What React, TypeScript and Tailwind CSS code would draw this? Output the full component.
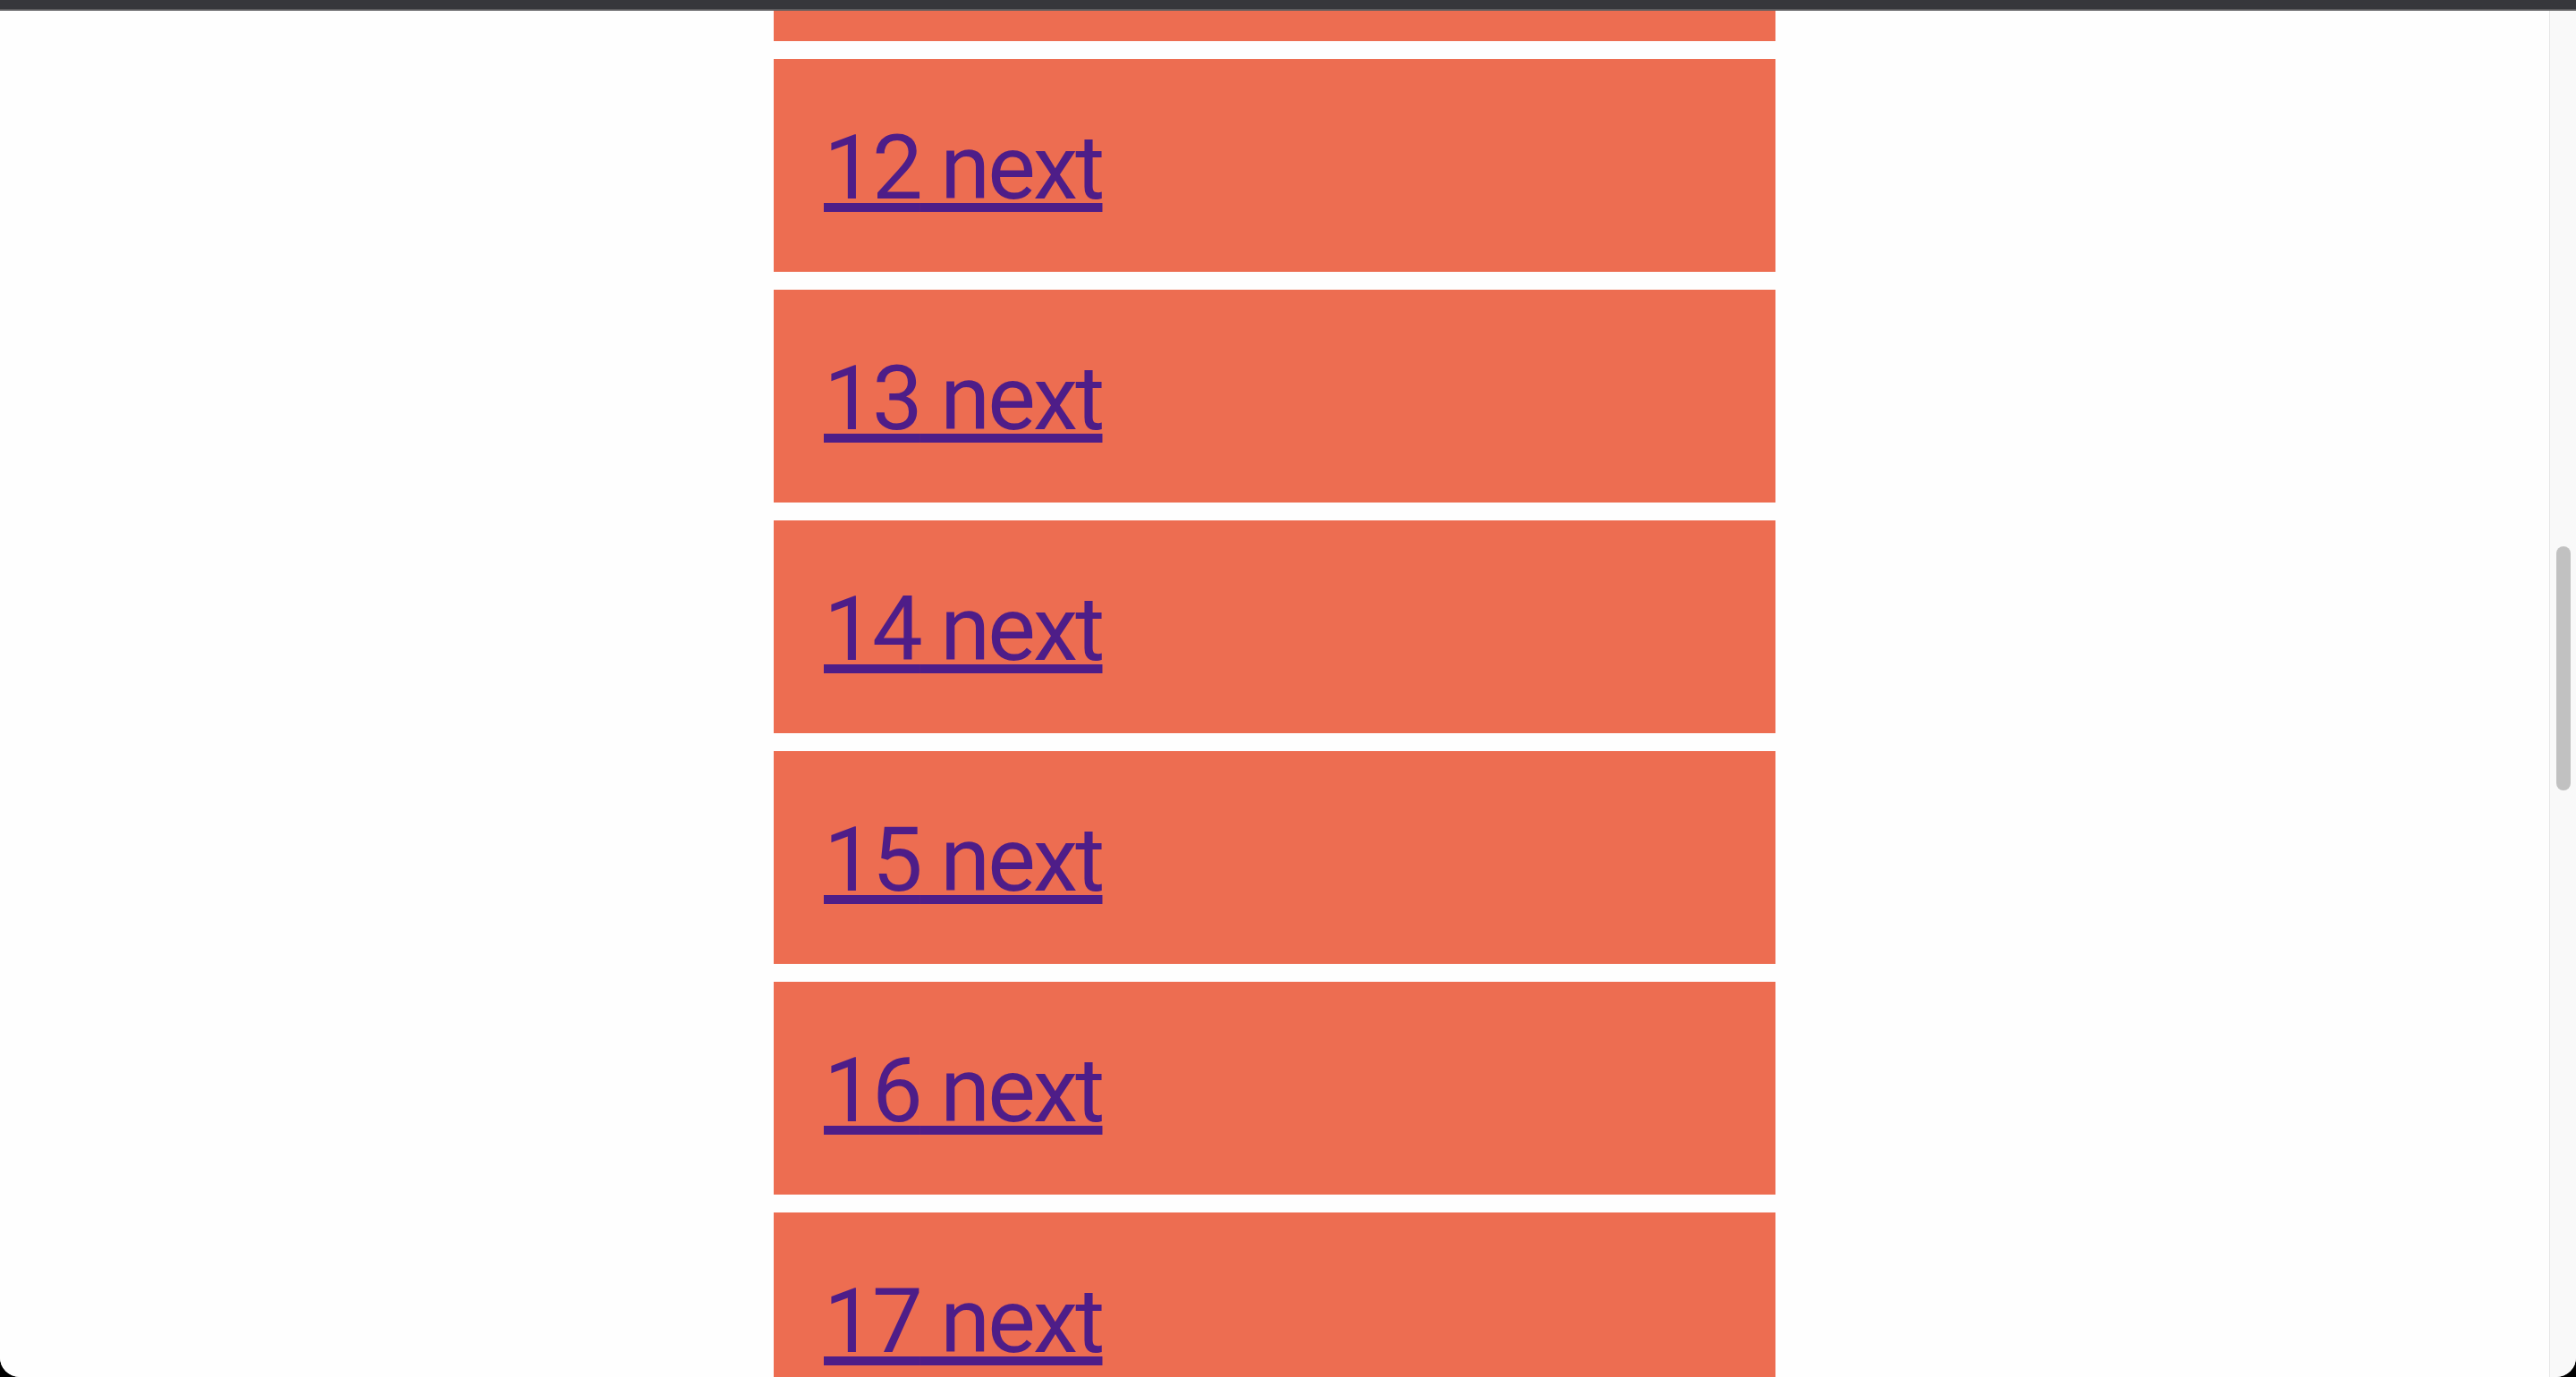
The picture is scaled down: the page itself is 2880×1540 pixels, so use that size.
const items = [11, 12, 13, 14, 15, 16, 17, 18];

export default function App() {
  return (
    <div className="h-[1540px] w-[2880px] bg-black flex flex-col overflow-hidden">
      <div className="h-[10px] bg-[#36373b]" />
      <div className="h-[2px] bg-[#5d5d5f]" />
      <div className="flex-1 min-h-0 flex bg-white rounded-b-[22px] overflow-hidden">
        {/* page */}
        <div className="flex-1 min-w-0 overflow-hidden bg-[#fefefe]">
          <ul className="w-[1120px] mx-auto mt-[-204px] flex flex-col gap-[20px]">
            {items.map((n) => (
              <li
                key={n}
                className="h-[238px] shrink-0 bg-[#ed6d51] pl-[56px] pt-[72px]"
              >
                <a
                  href="#"
                  className="block w-fit text-[101px] leading-[100px] tracking-[-2.8px] text-[#4e1d88] underline decoration-[10px] underline-offset-[5px] font-['Roboto',sans-serif]"
                >
                  {n} next
                </a>
              </li>
            ))}
          </ul>
        </div>
        {/* scrollbar */}
        <div className="w-[30px] shrink-0 bg-[#f9f9f9] border-l border-[#e6e6e6] pl-[7px] pr-[6px] pt-[599px]">
          <div className="h-[273px] rounded-full bg-[#c1c1c1]" />
        </div>
      </div>
    </div>
  );
}
